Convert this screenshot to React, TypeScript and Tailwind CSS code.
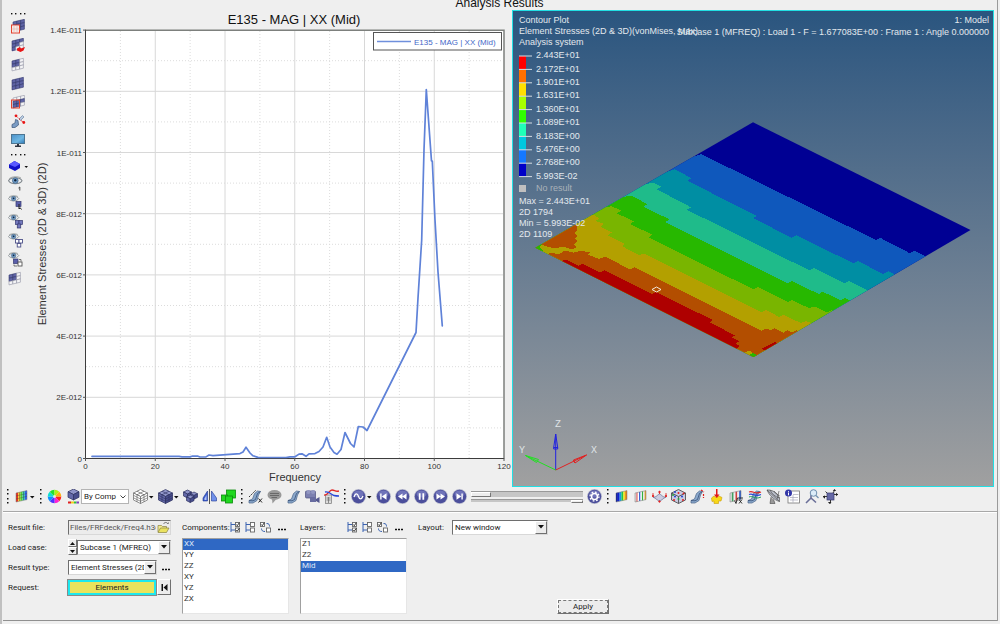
import React, { ReactNode } from 'react';

const UI_FONT = "font-['Roboto','Liberation_Sans',sans-serif]";

/* ---------- small drawing helpers ---------- */

interface IconProps {
  children: ReactNode;
  w?: number;
  h?: number;
}

function Icon({ children, w = 15, h = 15 }: IconProps) {
  return (
    <svg width={w} height={h} viewBox={`0 0 ${w} ${h}`} className="block shrink-0" aria-hidden="true">
      {children}
    </svg>
  );
}

// 3x3 sheared element grid, cells listed in `filled` are solid
function Mesh({ filled, x = 0, y = 0 }: { filled: number[]; x?: number; y?: number }) {
  const cells = [];
  for (let r = 0; r < 3; r++) {
    for (let c = 0; c < 3; c++) {
      const px = x + 2 + c * 3.8;
      const py = y + 4 + r * 3.3 - c * 0.9;
      const on = filled.includes(r * 3 + c);
      cells.push(
        <polygon
          key={r * 3 + c}
          points={`${px},${py} ${px + 3.8},${py - 0.9} ${px + 3.8},${py + 2.4} ${px},${py + 3.3}`}
          fill={on ? '#5f64a6' : '#f4f4f6'}
          stroke={on ? '#33386c' : '#9092a2'}
          strokeWidth="0.6"
        />
      );
    }
  }
  return <g>{cells}</g>;
}

function Cube({ x, y, s, wire = false }: { x: number; y: number; s: number; wire?: boolean }) {
  const h = s / 2;
  const q = s / 4;
  const stroke = wire ? '#666' : '#2d3160';
  return (
    <g stroke={stroke} strokeWidth="0.7" strokeLinejoin="round">
      <polygon points={`${x},${y + q} ${x + h},${y} ${x + s},${y + q} ${x + h},${y + h}`} fill={wire ? '#fff' : '#8f94c8'} />
      <polygon points={`${x},${y + q} ${x + h},${y + h} ${x + h},${y + s} ${x},${y + s - q}`} fill={wire ? '#fff' : '#6368a8'} />
      <polygon points={`${x + s},${y + q} ${x + h},${y + h} ${x + h},${y + s} ${x + s},${y + s - q}`} fill={wire ? '#fff' : '#484d8c'} />
    </g>
  );
}

function GridCube({ wire = false }: { wire?: boolean }) {
  return (
    <Icon>
      <Cube x={0.5} y={0.5} s={14} wire={wire} />
      <g fill="none" stroke={wire ? '#555' : '#2d3160'} strokeWidth="0.6">
        <path d="M4 2.2 11 5.8V12.8M11 2.2 4 5.8V12.8" />
        <path d="M.5 6.3 7.5 10 14.5 6.3M.5 8.8 7.5 12.3 14.5 8.8" />
      </g>
    </Icon>
  );
}

function Eye({ big = false }: { big?: boolean }) {
  return (
    <g transform={big ? 'scale(1.3)' : undefined}>
      <path d="M.4 3.6C2 .8 9 .4 10.800 3.600 9 6.600 2.500 6.800.4 3.600Z" fill="#eef0f2" stroke="#7f868c" strokeWidth="0.8" />
      <circle cx="5.600" cy="3.500" r="2.200" fill="#6f9cc8" stroke="#38597d" strokeWidth="0.5" />
      <circle cx="5.600" cy="3.300" r="0.900" fill="#10243c" />
      <path d="M1 2C3 .2 8 .2 10 1.600" fill="none" stroke="#9a9f9f" strokeWidth="0.7" />
    </g>
  );
}

function Bent({ dx = 0 }: { dx?: number }) {
  return (
    <g transform={`translate(${dx} 0)`}>
      <path d="M1 11.500 4.500 10 6.500 4.500 9.500 2 12.500 2.500 10.500 6 9 11.500 5 14 1 14Z" fill="#8aa8cc" stroke="#4a6488" strokeWidth="0.7" />
      <path d="M1 11.500 5 11.800 7.500 10.500 9.500 4.500 12.500 2.500" fill="none" stroke="#2d456b" strokeWidth="0.7" />
    </g>
  );
}

function Dots({ vertical = false }: { vertical?: boolean }) {
  return vertical ? (
    <svg width="4" height="15" viewBox="0 0 4 15" className="block shrink-0" aria-hidden="true">
      {[0, 4, 9, 13].map((y) => (
        <rect key={y} x="1" y={y} width="1.500" height="1.500" fill="#111" />
      ))}
    </svg>
  ) : (
    <svg width="18" height="4" viewBox="0 0 18 4" className="block shrink-0" aria-hidden="true">
      {[2, 6, 11, 15].map((x) => (
        <rect key={x} x={x} y="2" width="1.400" height="1.400" fill="#111" />
      ))}
    </svg>
  );
}

function Caret() {
  return (
    <svg width="6" height="15" viewBox="0 0 6 15" className="block shrink-0" aria-hidden="true">
      <path d="M1 7H5.500L3.250 9.500Z" fill="#111" />
    </svg>
  );
}

function Tool({ label, children }: { label: string; children: ReactNode }) {
  return (
    <button type="button" aria-label={label} className="flex shrink-0 items-center">
      {children}
    </button>
  );
}

/* ---------- left tool strip ---------- */

const ALL = [0, 1, 2, 3, 4, 5, 6, 7, 8];

function SideBar() {
  return (
    <nav className="flex flex-col items-start gap-1 pt-px pl-[6px]">
      <div className="pl-px"><Dots /></div>
      <Tool label="Mask">
        <Icon w={18}><Mesh filled={ALL} x={3} y={-1} /><rect x="3.500" y="6" width="8" height="8" fill="#f8e9e6" stroke="#e5412d" /><path d="M6 6V14M9 6V14M3.500 10H11.500" stroke="#d9b6b0" strokeWidth="0.6" /></Icon>
      </Tool>
      <Tool label="Reverse mask">
        <Icon w={18}><Mesh filled={[0, 1, 2, 3, 4, 6]} x={2} y={-1} /><path d="M9 10.500 12 9 13 10.500 17 9 15.500 12.500 12.500 14 9 12.500Z" fill="#e81515" /></Icon>
      </Tool>
      <Tool label="Unmask adjacent">
        <Icon w={18}><Mesh filled={[0, 1, 3, 4]} x={2} /></Icon>
      </Tool>
      <Tool label="Unmask all">
        <Icon w={18}><Mesh filled={ALL} x={2} /></Icon>
      </Tool>
      <Tool label="Mask not shown">
        <Icon w={18}><Mesh filled={[3, 4, 5, 6, 7]} x={3} y={-1} /><rect x="3.500" y="5" width="8" height="8" fill="none" stroke="#e5412d" /></Icon>
      </Tool>
      <Tool label="Spherical clipping">
        <Icon w={18}>
          <path d="M4 10.500 7 9 7.500 5.500 10 6.500 10.500 11 7 13.500 4 13.500Z" fill="#7b9cc4" stroke="#3a5478" strokeWidth="0.700" />
          <path d="M11 5 14.500 1.500 16 3 12.500 6.500Z" fill="#b9cbe0" stroke="#5f7a9c" strokeWidth="0.600" />
          <path d="M8 2 16 9" stroke="#e81515" strokeWidth="1" strokeDasharray="2 1.500" />
          <circle cx="8" cy="1.800" r="1.400" fill="#e81515" /><circle cx="15.800" cy="8.500" r="1.400" fill="#e81515" />
        </Icon>
      </Tool>
      <Tool label="Screen">
        <Icon w={18}>
          <defs><linearGradient id="scr" x2="1" y2="1"><stop stopColor="#4a90c9" /><stop offset=".6" stopColor="#6fb7e2" /><stop offset="1" stopColor="#2c76b4" /></linearGradient></defs>
          <rect x="3.500" y="1.500" width="13" height="9" fill="url(#scr)" stroke="#4d7591" />
          <path d="M9 11H11V12.500H13V14H7V12.500H9Z" fill="#2f3540" />
        </Icon>
      </Tool>
      <div className="pl-px"><Dots /></div>
      <Tool label="Component">
        <Icon w={20} h={12}>
          <path d="M1 4.500 6.500 1 12 4V8L7 11 1 8Z" fill="#1212c8" />
          <path d="M1 4.500 6.500 1 12 4 7 7Z" fill="#5a5aff" /><path d="M16.500 6H20L18.250 8Z" fill="#111" />
        </Icon>
      </Tool>
      <Tool label="Show one">
        <Icon w={18}><Eye big /><path d="M10.500 12 11.800 11V14.500" fill="none" stroke="#444" /></Icon>
      </Tool>
      <Tool label="Isolate">
        <Icon w={18}><Eye /><rect x="8" y="6.500" width="5" height="5" fill="#5a5faa" stroke="#34386f" strokeWidth="0.700" /><path d="M11 9V14L12.200 12.800 13.500 14.500" fill="none" stroke="#222" /></Icon>
      </Tool>
      <Tool label="Show all">
        <Icon w={18}><Eye /><g fill="#7479bd" stroke="#34386f" strokeWidth="0.700"><rect x="7.500" y="6.500" width="3.500" height="4" /><rect x="11" y="6.500" width="3.500" height="4" /><rect x="9.250" y="10" width="3.500" height="4" /></g></Icon>
      </Tool>
      <Tool label="Show none">
        <Icon w={18}><Eye /><g fill="#fff" stroke="#4c5088" strokeWidth="0.900"><rect x="7.500" y="6.500" width="3.500" height="3.500" /><rect x="11" y="6.500" width="3.500" height="3.500" /><rect x="9.250" y="10.500" width="3.500" height="3.500" /></g></Icon>
      </Tool>
      <Tool label="Reverse display">
        <Icon w={18}><Eye /><rect x="5.500" y="7" width="4.500" height="4.500" fill="#5a5faa" stroke="#34386f" strokeWidth="0.700" /><rect x="10" y="10" width="4" height="4" fill="#fff" stroke="#555" strokeWidth="0.900" /><path d="M11 7.500H13V9.500M6 12.500V14H9" fill="none" stroke="#555" strokeWidth="0.800" /></Icon>
      </Tool>
      <Tool label="Display mesh">
        <Icon w={18}><Mesh filled={[0, 1, 3, 4]} x={-1} /></Icon>
      </Tool>
    </nav>
  );
}

/* ---------- frequency plot ---------- */

const X_TICKS = [0, 20, 40, 60, 80, 100, 120];
const Y_TICKS = ['0', '2E-012', '4E-012', '6E-012', '8E-012', '1E-011', '1.2E-011', '1.4E-011'];
const xAt = (v: number) => 85.5 + v * 3.4875;
const yAt = (i: number) => 458.5 - i * 61.2;

const CURVE =
  '92,456.3 179,456.3 182,456.9 190,456.9 192,456.2 198,456.2 200,457 206,456.9 209,455 213,455.6 240,453.6 243,452 246,447.2 250,453 253,455.8 258,457.4 286,457.5 290,456.8 295,456.8 299,454.1 302,453.8 306,456.3 309,453.8 315,453.6 319,451.500 323,447 326.700,437.300 330,447 334,452.500 337,454.200 341,449.500 345,432.500 347.500,437.500 350.500,443.500 354,447 358.300,426.500 363,427 367,430.500 416,332.500 418,298 421.700,240 424,150 426.300,89.500 431.500,161 432.300,161 435,220 438,272 442.300,326';

function FrequencyPlot() {
  return (
    <svg viewBox="30 10 482 477" className="block w-full min-w-0" role="img" aria-label="E135 - MAG | XX (Mid)" fontFamily="'Liberation Sans', sans-serif">
      <rect x="85.500" y="30" width="418.500" height="428.500" fill="#fff" />
      <g stroke="#dcdcdc" strokeDasharray="1 2">
        {X_TICKS.slice(0, -1).map((v) => (
          <line key={v} x1={xAt(v + 10)} x2={xAt(v + 10)} y1="31" y2="458" />
        ))}
        {Y_TICKS.slice(0, -1).map((v, i) => (
          <line key={v} x1="86" x2="503" y1={yAt(i + 0.5)} y2={yAt(i + 0.5)} />
        ))}
      </g>
      <g stroke="#d8d8d8">
        {X_TICKS.slice(1, -1).map((v) => (
          <line key={v} x1={xAt(v)} x2={xAt(v)} y1="31" y2="458" />
        ))}
        {Y_TICKS.slice(1, -1).map((v, i) => (
          <line key={v} x1="86" x2="503" y1={yAt(i + 1)} y2={yAt(i + 1)} />
        ))}
      </g>
      <path d="M85 30.200H504V458.500" fill="none" stroke="#7d807d" strokeWidth="1.500" />
      <path d="M85.500 30V458.500H504" fill="none" stroke="#3c3c3c" />
      <g fill="#333" fontSize="8">
        {X_TICKS.map((v) => (
          <g key={v}>
            <line x1={xAt(v)} x2={xAt(v)} y1="458" y2="461" stroke="#555" />
            <text x={xAt(v)} y="469" textAnchor="middle">{v}</text>
          </g>
        ))}
        {Y_TICKS.map((v, i) => (
          <g key={v}>
            <line x1="83" x2="86" y1={yAt(i)} y2={yAt(i)} stroke="#555" />
            <text x="82" y={yAt(i) + 3} textAnchor="end">{v}</text>
          </g>
        ))}
      </g>
      <polyline points={CURVE} fill="none" stroke="#5f82d8" strokeWidth="1.700" strokeLinejoin="round" strokeLinecap="round" />
      <text x="294" y="24" textAnchor="middle" fontSize="13" fill="#111">E135 - MAG | XX (Mid)</text>
      <text x="295" y="481" textAnchor="middle" fontSize="11" fill="#333">Frequency</text>
      <text transform="translate(46 244) rotate(-90)" textAnchor="middle" fontSize="11" fill="#333">Element Stresses (2D &amp; 3D) (2D)</text>
      <rect x="373.500" y="32.500" width="128" height="17.500" fill="#fff" stroke="#555" />
      <line x1="377" x2="411" y1="41.500" y2="41.500" stroke="#6f8fdc" strokeWidth="1.500" />
      <text x="414" y="44.500" fontSize="8" fill="#4468c8">E135 - MAG | XX (Mid)</text>
    </svg>
  );
}

/* ---------- contour model ---------- */

// every band runs from the upper left edge to the lower right one, and covers the one before it
const BANDS = [
  { fill: '#0f58bc', line: '701,154 876,240 880,237.700 910,253.300 914,250.700 928,257.500' },
  { fill: '#008ea3', line: '675,169.300 691.500,178.300 687.300,180.700 756.700,216 753.300,218.300 791.700,237.700 796.700,235.300 853.300,263.300 857.700,261 883.300,274 888.700,271.300 897,276' },
  { fill: '#1fbb8a', line: '653,182.500 661,186.700 656.700,189.300 691,207.300 686.700,209.700 809.300,270.300 814,268 844.700,283.300 849.300,281 871,292' },
  { fill: '#27b800', line: '631,195.500 647.300,204 643.300,206.700 669.300,219.300 665.300,222.300 787.700,283.300 792,281 818.700,294 822.700,291.700 840.700,300.300 845,298 854,302.500' },
  { fill: '#79b500', line: '612,206.300 621,210.700 616.700,213.300 634,221.300 630,224 652.300,234.700 648.300,237.300 753.300,289.300 758,287 787.700,302 792,300 809.300,308.300 814,306.300 826.700,312.300 831.700,310.300 837,313' },
  { fill: '#b3a000', line: '595,215.500 599,218.300 595.700,221 604,224 600.700,226.700 612,232.500 607.700,235.300 625,244 621.700,246 639.300,255.300 644,253.300 761.700,312.300 766,310 779.300,317 783.300,314.700 800.700,323 806,321 814,324 819,324' },
  { fill: '#b34e00', line: '543,256 551,252.500 558,254.500 565,250.500 573.300,252.700 581.700,250.700 590,252.500 588,254.500 599,259 605,256.700 630,269.300 634.700,267.300 761.700,330.700 766,328.300 770.700,330.300 774.700,328.300 783.300,332.700 787.700,330.300 792,332.500 796.700,330.300 802,333' },
];

function Model() {
  return (
    <svg viewBox="513 11 480 475" className="absolute inset-0 h-full w-full" role="img" aria-label="Stress contour on plate">
      <defs>
        <clipPath id="plate">
          <polygon points="753,122.300 970.500,230 753.500,357 535.500,247.700" />
        </clipPath>
      </defs>
      <g clipPath="url(#plate)" shapeRendering="crispEdges">
        <rect x="530" y="120" width="445" height="240" fill="#000093" />
        {BANDS.map((b) => (
          <polygon key={b.fill} points={`${b.line} 853,360 530,360 530,215`} fill={b.fill} />
        ))}
        <polygon points="539,244 576,220 577,230 574,233 577.500,236 575,238.700 577.500,241.500 574,244.500 577,247 572,249.500 563,246.500 554,248.500" fill="#b34e00" />
        <polygon points="535,247.500 541,243 543.500,246.500 540,248 543,250.500 538,251" fill="#27b800" />
        <polygon points="541,244.500 548,247.500 552,251 546,254 540,248" fill="#a9a300" />
        <polygon points="560,262 565,259.300 578.300,265.700 582.700,263.700 600,272.700 604.700,270.300 651.700,294 656,292 712.700,320 710,322.700 735,335.300 731.300,337.300 739.300,341.300 735.500,343.300 739.300,346 735,350 640,310" fill="#ae0000" />
        <polygon points="761.700,348.700 775,342 779,344 766,351" fill="#ae0000" />
        <polygon points="744,353 749,350.500 753.500,353.300 749,356" fill="#b3a000" />
        <polygon points="748,355.500 753.500,353 758,355.500 753,358" fill="#27b800" />
      </g>
      <polygon points="652,289.500 656.500,287 661,289.500 656.500,292" fill="none" stroke="#f3e9dd" />
      <g fill="none">
        <path d="M555.700 470V434M553.700 447.500 555.700 434 557.700 447.500ZM553.700 447.500H557.700V449H553.700Z" stroke="#2222e0" />
        <path d="M555.700 470 586.500 455M573.500 460 586.500 455 575 463ZM573.500 460 575 463" stroke="#e02222" />
        <path d="M555.700 470 525.500 455.500M538.500 459.500 525.500 455.500 536.500 462.500Z" stroke="#22e022" />
      </g>
      <g fill="#dfe3e6" fontSize="10" textAnchor="middle" fontFamily="'Liberation Mono', monospace">
        <text x="558" y="427">Z</text>
        <text x="594" y="453">X</text>
        <text x="522" y="453">Y</text>
      </g>
    </svg>
  );
}

const LEVELS = ['2.443E+01', '2.172E+01', '1.901E+01', '1.631E+01', '1.360E+01', '1.089E+01', '8.183E+00', '5.476E+00', '2.768E+00', '5.993E-02'];
const LEVEL_COLORS = ['#ff0000', '#ff7000', '#ffe000', '#a8ff00', '#30ff00', '#20ffb8', '#00c8e0', '#1478ff', '#0000c8'];

function ModelView() {
  return (
    <section className="relative min-w-0 overflow-hidden border border-[#22dfe4] bg-linear-to-b from-[#2a557f] to-[#a0a0a0] font-['Liberation_Sans',sans-serif] text-[9px] leading-[11px] text-[#e3e9ee]">
      <Model />
      <div className="relative pt-1 pl-[6px] whitespace-nowrap">
        <p>Contour Plot</p>
        <p>Element Stresses (2D &amp; 3D)(vonMises, Max)</p>
        <p>Analysis system</p>
        <div className="mt-px flex">
          <svg width="14" height="134" viewBox="0 0 14 134" aria-hidden="true">
            {LEVEL_COLORS.map((c, i) => (
              <rect key={c} x="0" y={7 + i * 13.4} width="7" height="13.500" fill={c} />
            ))}
            {LEVELS.map((l, i) => (
              <line key={l} x1="0" x2="13" y1={7 + i * 13.4} y2={7 + i * 13.4} stroke="#d5dde3" />
            ))}
          </svg>
          <ul className="grid h-[134px] grid-rows-10 items-center pl-[3px]">
            {LEVELS.map((l) => (
              <li key={l}>{l}</li>
            ))}
          </ul>
        </div>
        <p className="flex items-center gap-[10px] text-[#aab2ba]">
          <span className="h-[7px] w-[7px] bg-[#c0c0c0]" />
          No result
        </p>
        <div className="mt-[2px]">
          <p>Max = 2.443E+01</p>
          <p>2D 1794</p>
          <p>Min = 5.993E-02</p>
          <p>2D 1109</p>
        </div>
      </div>
      <div className="absolute top-[3px] right-1 text-right leading-3 whitespace-nowrap">
        <p>1: Model</p>
        <p>Subcase 1 (MFREQ) : Load 1 - F = 1.677083E+00 : Frame 1 : Angle 0.000000</p>
      </div>
    </section>
  );
}

/* ---------- toolbar ---------- */

function Round({ children }: { children: ReactNode }) {
  return (
    <Icon>
      <circle cx="7.500" cy="7.500" r="7.400" fill="#b3b6ca" />
      <circle cx="7.500" cy="7.500" r="6.700" fill="#4c4f9c" />
      <ellipse cx="7.500" cy="5" rx="5" ry="3.500" fill="#7f83c6" opacity="0.700" />
      {children}
    </Icon>
  );
}

const PLAYBACK: { label: string; d: string }[] = [
  { label: 'First frame', d: 'M4.200 4.500H5.600V10.500H4.200ZM10.500 4.300V10.700L5.800 7.500Z' },
  { label: 'Previous frame', d: 'M7.500 4.500V10.500L3 7.500ZM11.500 4.500V10.500L7.200 7.500Z' },
  { label: 'Pause', d: 'M4.800 4.300H6.600V10.700H4.800ZM8.400 4.300H10.200V10.700H8.400Z' },
  { label: 'Next frame', d: 'M3.500 4.500V10.500L7.800 7.500ZM7.500 4.500V10.500L12 7.500Z' },
  { label: 'Last frame', d: 'M4.500 4.300V10.700L9.200 7.500ZM9.400 4.500H10.800V10.500H9.400Z' },
];

const WHEEL = ['#ff2020', '#ff20d0', '#5030ff', '#1090ff', '#10e0d0', '#20e030', '#b0f010', '#ffb010'];

function Stripes({ colors }: { colors: string[] }) {
  const w = 11 / colors.length;
  return (
    <g>
      {colors.map((c, i) => (
        <polygon
          key={i}
          points={`${2 + i * w},${4 - i * w * 0.22} ${2 + (i + 1) * w},${4 - (i + 1) * w * 0.22} ${2 + (i + 1) * w},${13 - (i + 1) * w * 0.22} ${2 + i * w},${13 - i * w * 0.22}`}
          fill={c}
        />
      ))}
      <path d="M2 4 13 1.600V10.600L2 13Z" fill="none" stroke="#777" strokeWidth="0.500" />
    </g>
  );
}

const THUMB =
  '[&::-webkit-slider-thumb]:appearance-none [&::-webkit-slider-thumb]:rounded-none [&::-webkit-slider-thumb]:border [&::-webkit-slider-thumb]:border-t-white [&::-webkit-slider-thumb]:border-l-white [&::-webkit-slider-thumb]:border-r-[#777] [&::-webkit-slider-thumb]:border-b-[#777] [&::-webkit-slider-thumb]:bg-[#ededed]';

function ToolBar() {
  return (
    <div className="flex h-[25px] items-center gap-1 border-b border-[#a8a8a8] pb-[5px] pl-[3px]">
      <Dots vertical />
      <Tool label="Contour">
        <Icon><Stripes colors={['#e83020', '#f8d020', '#50d030', '#20d0b0', '#3060f0']} /><path d="M2 7 13 4.500M2 10 13 7.300M5.500 3.500V12M9.500 2.500V11" stroke="#444" strokeWidth="0.400" /></Icon>
        <Caret />
      </Tool>
      <Dots vertical />
      <Tool label="Colors">
        <Icon>
          {WHEEL.map((c, i) => {
            const a = (i * Math.PI) / 4;
            const b = ((i + 1) * Math.PI) / 4;
            return <path key={c} fill={c} d={`M7.500 7.500 L${7.5 + 6.8 * Math.cos(a)} ${7.5 + 6.8 * Math.sin(a)} A6.800 6.800 0 0 1 ${7.5 + 6.8 * Math.cos(b)} ${7.5 + 6.8 * Math.sin(b)}Z`} />;
          })}
          <circle cx="7.500" cy="7.500" r="1.500" fill="#fff" opacity="0.700" />
        </Icon>
      </Tool>
      <div className="flex shrink-0 items-center">
        <Tool label="Color mode">
          <Icon><Cube x={2} y={0} s={11} /><rect x="2" y="12.500" width="3" height="2" fill="#e02020" /><rect x="5" y="12.500" width="3" height="2" fill="#f0d020" /><rect x="8" y="12.500" width="2.500" height="2" fill="#30c040" /><rect x="10.500" y="12.500" width="2.500" height="2" fill="#8040c0" /></Icon>
        </Tool>
        <div className="relative">
          <select aria-label="Color by" className={`block h-[15px] w-12 appearance-none border border-[#b4b4b4] bg-white pl-[2px] text-[8px] leading-[13px] text-[#222] ${UI_FONT}`}>
            <option>By Comp</option>
          </select>
          <svg width="6" height="4" viewBox="0 0 6 4" className="pointer-events-none absolute top-[6px] right-[3px]" aria-hidden="true">
            <path d="M.5.5 3 3 5.500.5" fill="none" stroke="#444" />
          </svg>
        </div>
      </div>
      <Tool label="Wireframe elements"><GridCube wire /><Caret /></Tool>
      <Tool label="Shaded elements"><GridCube /><Caret /></Tool>
      <Tool label="Solids">
        <Icon><Cube x={0.5} y={1} s={8} /><Cube x={7.5} y={3} s={7} /><Cube x={3.5} y={6} s={7.500} /></Icon>
      </Tool>
      <Tool label="Mirror">
        <Icon><path d="M7.500 0V15" stroke="#555" /><path d="M1 12V9L5.500 2V12Z" fill="#3d5fd0" stroke="#1f3590" strokeWidth="0.600" /><path d="M2.500 11V9.500L4.500 6V11Z" fill="#b8c8f5" /><path d="M14.500 12V9L9.500 2V12Z" fill="#6f90ea" stroke="#1f3590" strokeWidth="0.600" /></Icon>
      </Tool>
      <Tool label="Boolean">
        <Icon><g fill="#1fd81f" stroke="#0a8a0a" strokeWidth="0.800"><rect x="5.500" y="1" width="9" height="8" /><rect x="0.500" y="6" width="6" height="6" /><rect x="4.500" y="7" width="7" height="7" /></g></Icon>
      </Tool>
      <Dots vertical />
      <Tool label="Measure">
        <Icon><Bent /><path d="M1 8 8 1" stroke="#333" strokeDasharray="2 1" /><path d="M10.500 9.500 14 13.500M14 9.500 10.500 13.500" stroke="#222" /></Icon>
      </Tool>
      <Tool label="Note">
        <Icon><ellipse cx="7.500" cy="6" rx="7" ry="5" fill="#999" /><path d="M5 10 5.500 14.500 9 10.500Z" fill="#999" /><path d="M3 4.500H12M3 6.500H12M4.500 8.500H10" stroke="#555" strokeWidth="0.700" /></Icon>
      </Tool>
      <Tool label="Deformed"><Icon><Bent dx={1} /></Icon></Tool>
      <Tool label="Camera">
        <Icon><rect x="0.500" y="2" width="10" height="7" rx="1" fill="#7c80b0" stroke="#4d507e" strokeWidth="0.700" /><circle cx="3.500" cy="3" r="2" fill="#9296c2" /><circle cx="8" cy="3" r="2" fill="#9296c2" /><rect x="5" y="8" width="6" height="5" fill="#686ca0" /><path d="M11 10 14.500 8V14L11 12Z" fill="#54588e" /></Icon>
      </Tool>
      <Tool label="Build plots">
        <Icon><rect x="1.500" y="6" width="6" height="8.500" fill="#ddd" stroke="#777" strokeWidth="0.700" /><path d="M2.500 9H6.500M2.500 11H6.500M4.500 8V14" stroke="#666" strokeWidth="0.700" /><path d="M0 6C4 7 5 1 8 1S11 3 15 2" fill="none" stroke="#e02828" strokeWidth="1.300" /><path d="M1 3C5 2 8 6 10 6.500S13 7 15 7" fill="none" stroke="#2848d8" strokeWidth="1.300" /></Icon>
      </Tool>
      <Dots vertical />
      <Tool label="Animation mode">
        <Round><path d="M3 8C4.500 3.500 6.500 4.500 7.500 7.500S10.500 11 12 7" fill="none" stroke="#fff" strokeWidth="1.300" /></Round>
        <Caret />
      </Tool>
      {PLAYBACK.map((p) => (
        <Tool key={p.label} label={p.label}>
          <Round><path d={p.d} fill="#fff" /></Round>
        </Tool>
      ))}
      <div className="flex w-28 shrink-0 flex-col gap-[2px]">
        <input type="range" aria-label="Frame" min={0} max={100} defaultValue={0} className={`block h-[6px] w-full appearance-none border-t border-[#999] bg-[#c6c6c6] [&::-webkit-slider-thumb]:h-[5px] [&::-webkit-slider-thumb]:w-5 ${THUMB}`} />
        <input type="range" aria-label="Speed" min={0} max={100} defaultValue={100} className={`block h-[3px] w-full appearance-none border-t border-[#999] bg-[#c6c6c6] [&::-webkit-slider-thumb]:h-[3px] [&::-webkit-slider-thumb]:w-3 ${THUMB}`} />
      </div>
      <Tool label="Animation controls">
        <Round>
          <circle cx="7.500" cy="7.500" r="3" fill="none" stroke="#fff" strokeWidth="1.600" />
          <circle cx="7.500" cy="7.500" r="4.500" fill="none" stroke="#fff" strokeWidth="1.300" strokeDasharray="1.700 1.830" />
        </Round>
      </Tool>
      <Dots vertical />
      <Tool label="Contour panel"><Icon><Stripes colors={['#0010a0', '#1020d0', '#10a0e0', '#20c840', '#f0e020', '#e08010']} /></Icon></Tool>
      <Tool label="Iso"><Icon><Stripes colors={['#ddd', '#e06060', '#fff', '#2050d0', '#fff', '#30b040', '#eee', '#e0a030']} /></Icon></Tool>
      <Tool label="Vector">
        <Icon><path d="M1 8C4 9 6 5 7.500 5S11 9 14 8C11 9.500 9 12 7.500 12S4 9.500 1 8Z" fill="#c9cbe0" stroke="#666a90" strokeWidth="0.700" /><g fill="#e02020" stroke="#e02020" strokeWidth="0.800"><path d="M1 8V4M7.500 5V2M14 8V4" /><circle cx="1" cy="7" r="0.800" /><circle cx="7.500" cy="3" r="0.800" /><circle cx="14" cy="7" r="0.800" /><circle cx="7.500" cy="12.500" r="0.800" /></g></Icon>
      </Tool>
      <Tool label="Tensor">
        <Icon><path d="M.5 4 7.500.5 14.500 4V11L7.500 14.500.5 11Z" fill="#c8cae0" /><path d="M.5 4 7.500 7.500 14.500 4M7.500 7.500V14.500M.5 4V11L7.500 14.500 14.500 11V4L7.500.5Z" fill="none" stroke="#444" strokeWidth="0.800" /><g fill="#e02020"><circle cx="7.500" cy="4" r="1" /><circle cx="3" cy="11" r="1" /><circle cx="12" cy="11" r="1" /><circle cx="12.500" cy="4.500" r="1" /></g><g fill="#2040d0"><circle cx="4" cy="3" r="1" /><circle cx="4" cy="7.500" r="1" /><circle cx="11" cy="7.500" r="1" /></g><g fill="#20a040"><circle cx="7.500" cy="10" r="1" /><circle cx="2" cy="6" r="1" /></g></Icon>
      </Tool>
      <Tool label="Deformed panel"><Icon><Bent /><path d="M11 1 14 3M13.500 5V9" stroke="#e02020" strokeWidth="1.200" strokeDasharray="2 1" /></Icon></Tool>
      <Tool label="Apply style">
        <Icon><path d="M2.500 9 5 7 7.500 8.500 10 7 13 8.500 12 12 9.500 12V14.500H5V12L3 12.500Z" fill="#f8d818" stroke="#c99a08" strokeWidth="0.600" /><path d="M7 0H8.500V5.500H10.500L7.800 9 5 5.500H7Z" fill="#e01818" /></Icon>
      </Tool>
      <Tool label="Derived results">
        <Icon><Stripes colors={['#ddd', '#40a060', '#eee', '#d04040', '#eee', '#3060d0']} /><path d="M6.500 11.500 8 14.500 9.500 9H15M11 10.500 14 14.500M14 10.500 11 14.500" fill="none" stroke="#222" strokeWidth="0.900" /></Icon>
      </Tool>
      <Tool label="Streamlines">
        <Icon><Bent /><path d="M2 3C6 1 8 6 14 3" fill="none" stroke="#e02828" strokeWidth="1.100" /><path d="M2 5.500C6 3.500 8 8.500 14 5.500" fill="none" stroke="#2848d8" strokeWidth="1.100" /><path d="M2 8C6 6 8 11 14 8" fill="none" stroke="#20a060" /></Icon>
      </Tool>
      <Tool label="Section cut">
        <Icon><path d="M1 1C3 6 8 11 13.500 12.500 14.500 6 8 .5 1 1Z" fill="#b9bec9" stroke="#555" strokeWidth="0.700" /><path d="M1 1 13.500 12.500M4 1C6 5 9 8 14 9M8 2C9 4 11 6 13.500 6.500M11 10.500 13 2" stroke="#444" strokeWidth="0.600" fill="none" /><path d="M5 8 4 14.500H9L7.500 10.500" fill="#999" stroke="#444" strokeWidth="0.600" /></Icon>
      </Tool>
      <Tool label="Entity info">
        <Icon><rect x="3" y="2" width="11.500" height="12" fill="#fff" stroke="#777" strokeWidth="0.800" /><path d="M8 5.500H13.500M5 8.500H13M5 11H13M8 6V13.500" stroke="#a8a8b8" strokeWidth="0.700" /><circle cx="3.500" cy="4" r="3.500" fill="#3438a8" /><path d="M3.500 2V2.800M3.500 3.500V6.300" stroke="#fff" /></Icon>
      </Tool>
      <Tool label="Query">
        <Icon><path d="M7 2.500V9L2 14M7 9 12 13.500" fill="none" stroke="#6a6f98" strokeWidth="1.600" /><circle cx="9.500" cy="4" r="3.300" fill="#dcecf8" stroke="#6f8fae" /><path d="M12 6.500 14.500 9" stroke="#6f8fae" strokeWidth="1.300" /></Icon>
      </Tool>
      <Tool label="Exploded view">
        <Icon><rect x="4" y="4" width="7" height="7" fill="#6569a6" stroke="#3a3d70" strokeWidth="0.700" /><path d="M7.500 11V14.500M4 7.500H0M11 5.500H15M10 4 11.500 1.500M4 4 2.500 2.500" stroke="#222" strokeWidth="0.900" /><path d="M0 8 2 6.300V9.700ZM15 5.500 13 3.800V7.200ZM6.500 15 5 13H8.500ZM11.500 0 9.800 2H13.200Z" fill="#222" /></Icon>
      </Tool>
    </div>
  );
}

/* ---------- result panel ---------- */

const SUNKEN = 'border border-t-[#6e6e6e] border-l-[#6e6e6e] border-r-[#d8d8d8] border-b-[#d8d8d8]';
const RAISED = 'border border-t-white border-l-white border-r-[#707070] border-b-[#707070] bg-[#ececec]';

function Drop({ id, value }: { id: string; value: string }) {
  return (
    <div className="relative min-w-0 flex-1">
      <select id={id} className={`block h-[15px] w-full appearance-none overflow-hidden bg-white pr-3 pl-[2px] leading-[13px] text-clip text-[#222] ${SUNKEN}`}>
        <option>{value}</option>
      </select>
      <span className={`pointer-events-none absolute top-px right-px flex h-[13px] w-3 items-center justify-center ${RAISED}`}>
        <svg width="6" height="4" viewBox="0 0 6 4" aria-hidden="true"><path d="M0 0H6L3 3.500Z" fill="#111" /></svg>
      </span>
    </div>
  );
}

function Row({ label, htmlFor, children }: { label: string; htmlFor: string; children: ReactNode }) {
  return (
    <div className="flex h-5 items-center">
      <label htmlFor={htmlFor} className="w-[60px] shrink-0">{label}</label>
      <div className="flex min-w-0 flex-1 items-center">{children}</div>
    </div>
  );
}

function Box({ x, y, checked = false }: { x: number; y: number; checked?: boolean }) {
  return (
    <g fill="none">
      <rect x={x} y={y} width="4" height="4" fill="#fff" stroke="#666" strokeWidth="0.900" />
      {checked && <path d={`M${x + 0.8} ${y + 2} l1 1.200 l2 -3`} stroke="#222" strokeWidth="0.900" />}
    </g>
  );
}

function PickTools() {
  return (
    <div className="ml-auto flex items-center gap-1">
      <Tool label="Select all">
        <Icon w={11} h={11}><path d="M1 0V10M1 2.500H5M1 8H5" stroke="#3a62b0" fill="none" /><Box x={5.500} y={0.500} checked /><Box x={5.500} y={6} checked /></Icon>
      </Tool>
      <Tool label="Select none">
        <Icon w={11} h={11}><path d="M1 0V10M1 2.500H5M1 8H5" stroke="#3a62b0" fill="none" /><Box x={5.500} y={0.500} /><Box x={5.500} y={6} /></Icon>
      </Tool>
      <Tool label="Flip selection">
        <Icon w={12} h={11}><Box x={0.5} y={0.5} checked /><Box x={6.500} y={6} /><path d="M6.500 1.500C9 1.500 9.500 2.500 9.500 4.500M1.500 6.500C1.500 8.500 2.500 9.500 5 9.500" stroke="#3a62b0" fill="none" /></Icon>
      </Tool>
      <Tool label="More">
        <Icon w={14} h={11}><path d="M2 7.500H4M5 7.500H7M8 7.500H10" stroke="#111" strokeWidth="1.500" /></Icon>
      </Tool>
    </div>
  );
}

function PickList({ id, title, items, selected }: { id: string; title: string; items: string[]; selected: string }) {
  return (
    <div className="w-[107px] shrink-0">
      <div className="flex h-5 items-center">
        <label htmlFor={id}>{title}</label>
        <PickTools />
      </div>
      <select
        id={id}
        multiple
        size={items.length}
        defaultValue={[selected]}
        className="mt-px block h-[76px] w-full overflow-hidden border border-t-[#a0a0a0] border-r-[#e6e6e6] border-b-[#e6e6e6] border-l-[#a0a0a0] bg-white text-[#333]"
      >
        {items.map((item) => (
          <option
            key={item}
            value={item}
            className="h-[11px] min-h-0 p-0 pl-px leading-[11px] checked:bg-linear-to-b checked:from-[#2f68c4] checked:to-[#2f68c4] checked:[-webkit-text-fill-color:#dfe8f8]"
          >
            {item}
          </option>
        ))}
      </select>
    </div>
  );
}

function ResultPanel() {
  return (
    <form className={`flex gap-[11px] border-t border-b border-t-white border-b-[#909090] pt-1 pb-[6px] pl-[5px] text-[8px] leading-[11px] text-[#222] ${UI_FONT}`}>
      <div className="w-[163px] shrink-0">
        <Row label="Result file:" htmlFor="file">
          <div className="relative w-full">
            <input id="file" defaultValue="Files/FRFdeck/Freq4.h3d" className={`block h-[15px] w-full bg-[#ececec] pr-[14px] pl-px text-[#555] ${SUNKEN}`} />
            <button type="button" aria-label="Browse" className="absolute top-px right-px bg-[#ececec]">
              <Icon w={13} h={13}><path d="M1 11V4.500H4.500L5.500 5.500H9.500V7" fill="#f2ea90" stroke="#8a8340" strokeWidth="0.700" /><path d="M1 11.500 3.500 7H12L9.500 11.500Z" fill="#eae260" stroke="#8a8340" strokeWidth="0.700" /><path d="M6.500 3C7.500 1 10 1 11 3L11.500 1.500" fill="none" stroke="#555" strokeWidth="0.800" /></Icon>
            </button>
          </div>
        </Row>
        <Row label="Load case:" htmlFor="load">
          <div className="flex w-[9px] shrink-0 flex-col">
            <button type="button" aria-label="Previous load case" className={`flex h-2 items-center justify-center ${RAISED}`}>
              <svg width="5" height="3" viewBox="0 0 5 3"><path d="M0 3H5L2.500 0Z" fill="#111" /></svg>
            </button>
            <button type="button" aria-label="Next load case" className={`flex h-2 items-center justify-center ${RAISED}`}>
              <svg width="5" height="3" viewBox="0 0 5 3"><path d="M0 0H5L2.500 3Z" fill="#111" /></svg>
            </button>
          </div>
          <Drop id="load" value="Subcase 1 (MFREQ)" />
        </Row>
        <Row label="Result type:" htmlFor="type">
          <Drop id="type" value="Element Stresses (2D &amp;" />
          <Tool label="Result type options">
            <Icon w={14} h={11}><path d="M5 7.500H7M8 7.500H10M11 7.500H13" stroke="#111" strokeWidth="1.500" /></Icon>
          </Tool>
        </Row>
        <Row label="Request:" htmlFor="request">
          <button id="request" type="button" className="h-[15px] flex-1 border-2 border-[#1ce8ee] bg-[#e9e35c] text-center leading-[11px] outline outline-[#8a8a8a]">
            Elements
          </button>
          <button type="button" aria-label="Reset request" className={`ml-px flex h-4 w-[14px] items-center justify-center ${RAISED}`}>
            <svg width="7" height="7" viewBox="0 0 7 7"><path d="M.5 0H2V7H.5ZM6.500 0V7L2.500 3.500Z" fill="#111" /></svg>
          </button>
        </Row>
      </div>
      <PickList id="components" title="Components:" items={['XX', 'YY', 'ZZ', 'XY', 'YZ', 'ZX']} selected="XX" />
      <PickList id="layers" title="Layers:" items={['Z1', 'Z2', 'Mid']} selected="Mid" />
      <div className="flex flex-1 flex-col justify-between">
        <div className="flex h-5 items-center">
          <label htmlFor="layout" className="w-[34px]">Layout:</label>
          <div className="flex w-24">
            <Drop id="layout" value="New window" />
          </div>
        </div>
        <button type="button" className={`ml-[139px] h-[15px] w-[52px] self-start leading-[11px] outline-1 -outline-offset-2 outline-[#777] outline-dashed ${RAISED}`}>
          Apply
        </button>
      </div>
    </form>
  );
}

export default function App() {
  return (
    <div className="min-h-screen overflow-hidden border-l-2 border-[#c0c0c0] bg-[#efefef] pr-[2px]">
      <div className="border-r border-[#9a9a9a]">
        <header className="flex h-[10px] items-end justify-center overflow-hidden">
          <h1 className="font-['Liberation_Sans',sans-serif] text-[12px] leading-[14px] text-[#111]">Analysis Results</h1>
        </header>
        <main className="grid grid-cols-[28px_1fr_1fr] pr-[3px]">
          <SideBar />
          <FrequencyPlot />
          <ModelView />
        </main>
        <div className="pl-px">
          <ToolBar />
          <ResultPanel />
        </div>
      </div>
    </div>
  );
}
